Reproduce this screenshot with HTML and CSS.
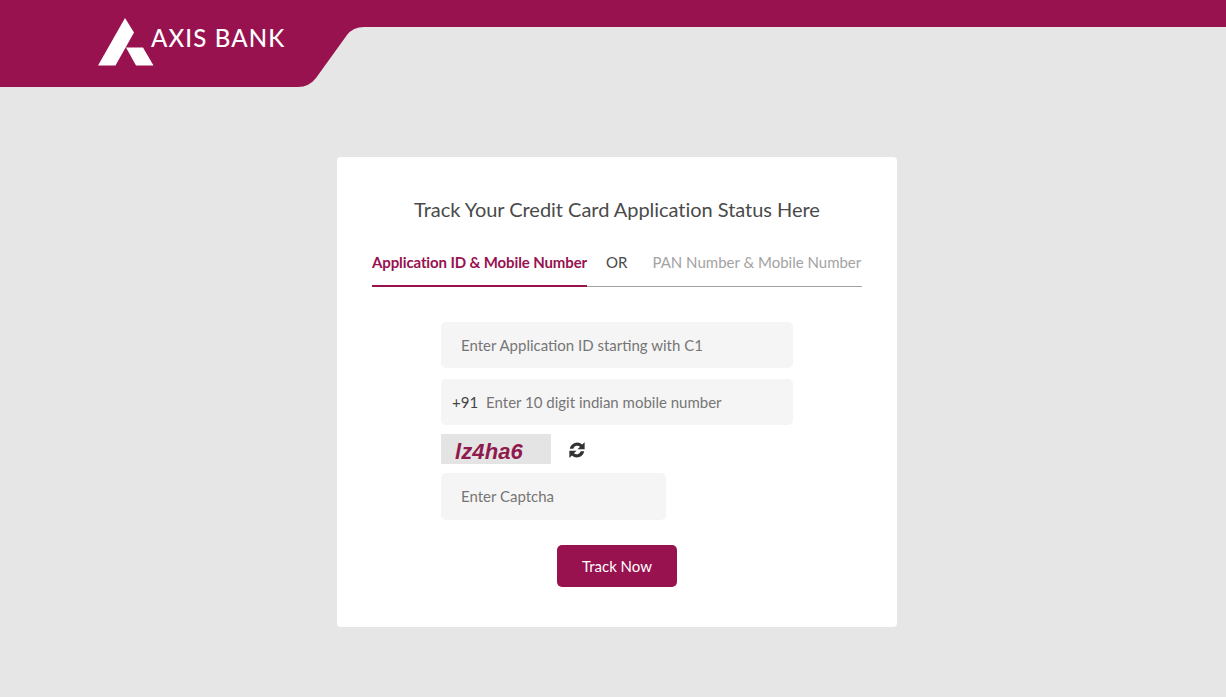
FILE: index.html
```html
<!DOCTYPE html>
<html lang="en">
<head>
<meta charset="utf-8">
<title>Track Application</title>
<link rel="stylesheet" href="styles.css">
</head>
<body>
<header class="site-header">
  <svg class="header-shape" width="1226" height="87" viewBox="0 0 1226 87" aria-hidden="true">
    <path d="M0 0H1226V27H364Q353 27 347 35L316 78Q309 87 298 87H0Z" fill="#97124f"/>
  </svg>
  <div class="logo">
    <svg class="logo-mark" width="56" height="48" viewBox="0 0 56 48" aria-hidden="true">
      <path d="M0 47.5L27 0L36 14.5L17.5 47.5Z" fill="#fff"/>
      <path d="M28 29.5H45L55.5 47.5H38Z" fill="#fff"/>
    </svg>
    <span class="logo-text">AXIS BANK</span>
  </div>
</header>
<main class="page">
  <section class="card">
    <h1 class="title">Track Your Credit Card Application Status Here</h1>
    <nav class="tabs">
      <a class="tab tab-active">Application ID &amp; Mobile Number</a>
      <span class="tab-or">OR</span>
      <a class="tab tab-muted">PAN Number &amp; Mobile Number</a>
    </nav>
    <form class="form">
      <div class="field"><span class="placeholder">Enter Application ID starting with C1</span></div>
      <div class="field field-phone"><span class="prefix">+91</span><span class="placeholder">Enter 10 digit indian mobile number</span></div>
      <div class="captcha-row">
        <div class="captcha-img">lz4ha6</div>
        <svg class="refresh" width="18" height="18" viewBox="0 0 16 16" aria-hidden="true">
          <path d="M1.6 6.8A6.6 6.6 0 0 1 12.6 3.1L14.8 1V7.4H8.4L10.7 5.1A3.7 3.7 0 0 0 4.7 6.8Z" fill="#333"/>
          <path d="M14.4 9.2A6.6 6.6 0 0 1 3.4 12.9L1.2 15V8.6H7.6L5.3 10.9A3.7 3.7 0 0 0 11.3 9.2Z" fill="#333"/>
        </svg>
      </div>
      <div class="field field-short"><span class="placeholder">Enter Captcha</span></div>
      <div class="actions"><button type="button" class="btn">Track Now</button></div>
    </form>
  </section>
</main>
</body>
</html>
```
FILE: styles.css
```css
* { box-sizing: border-box; }
html, body { margin: 0; padding: 0; }
body {
  background: #e6e6e6;
  font-family: Lato, "Open Sans", sans-serif;
  height: 697px;
  overflow: hidden;
  color: #444;
}
.site-header {
  position: relative;
  height: 87px;
  padding: 18px 0 0 98px;
}
.header-shape { position: absolute; left: 0; top: 0; }
.logo { position: relative; display: flex; align-items: flex-start; }
.logo-mark { display: block; }
.logo-text {
  color: #fff;
  font-size: 24px;
  font-weight: 500;
  line-height: 26px;
  margin: 7px 0 0 -3px;
  letter-spacing: 1.15px;
  white-space: nowrap;
}
.page { display: flex; justify-content: center; padding: 70px 0 0 8px; }
.card {
  width: 560px;
  height: 470px;
  background: #fff;
  border-radius: 4px;
  padding: 39px 35px 0;
}
.title {
  margin: 0;
  font-size: 20px;
  line-height: 26px;
  font-weight: 400;
  text-align: center;
  color: #4a4a4a;
  letter-spacing: -0.03px;
}
.tabs {
  display: flex;
  align-items: flex-end;
  margin-top: 25px;
  height: 40px;
  border-bottom: 1px solid #a3a3a3;
  font-size: 15px;
  white-space: nowrap;
}
.tab { display: block; height: 40px; line-height: 33px; }
.tab-active {
  width: 215px;
  color: #97124f;
  font-weight: 700;
  font-size: 15px;
  line-height: 31px;
  letter-spacing: -0.12px;
  border-bottom: 2px solid #97124f;
  margin-bottom: -1px;
}
.tab-or { height: 40px; line-height: 33px; margin-left: 19px; color: #4a4a4a; }
.tab-muted { margin-left: 25px; color: #a3a3a3; }
.form { display: flex; flex-direction: column; align-items: center; padding-top: 35px; }
.field {
  width: 352px;
  height: 46px;
  background: #f5f5f5;
  border-radius: 5px;
  padding: 0 20px;
  display: flex;
  align-items: center;
  font-size: 15px;
  margin-bottom: 11px;
}
.placeholder { color: #757575; }
.field-phone { padding-left: 11px; margin-bottom: 9px; }
.prefix { color: #444; margin-right: 8px; }
.captcha-row { width: 352px; height: 30px; display: flex; align-items: center; }
.captcha-img {
  width: 110px;
  height: 30px;
  background: #e4e4e4;
  color: #8f1a4d;
  font-family: "Liberation Sans", Arial, sans-serif;
  font-weight: 700;
  font-style: italic;
  font-size: 22px;
  line-height: 36px;
  letter-spacing: 0.1px;
  padding-left: 14px;
}
.refresh { margin: 2px 0 0 17px; }
.field-short {
  align-self: flex-start;
  margin: 9px 0 0 69px;
  width: 225px;
  height: 47px;
  padding-bottom: 2px;
}
.actions { margin-top: 25px; }
.btn {
  width: 120px;
  height: 42px;
  background: #97124f;
  color: #fff;
  border: 0;
  border-radius: 5px;
  font-family: inherit;
  font-size: 15px;
}
```
